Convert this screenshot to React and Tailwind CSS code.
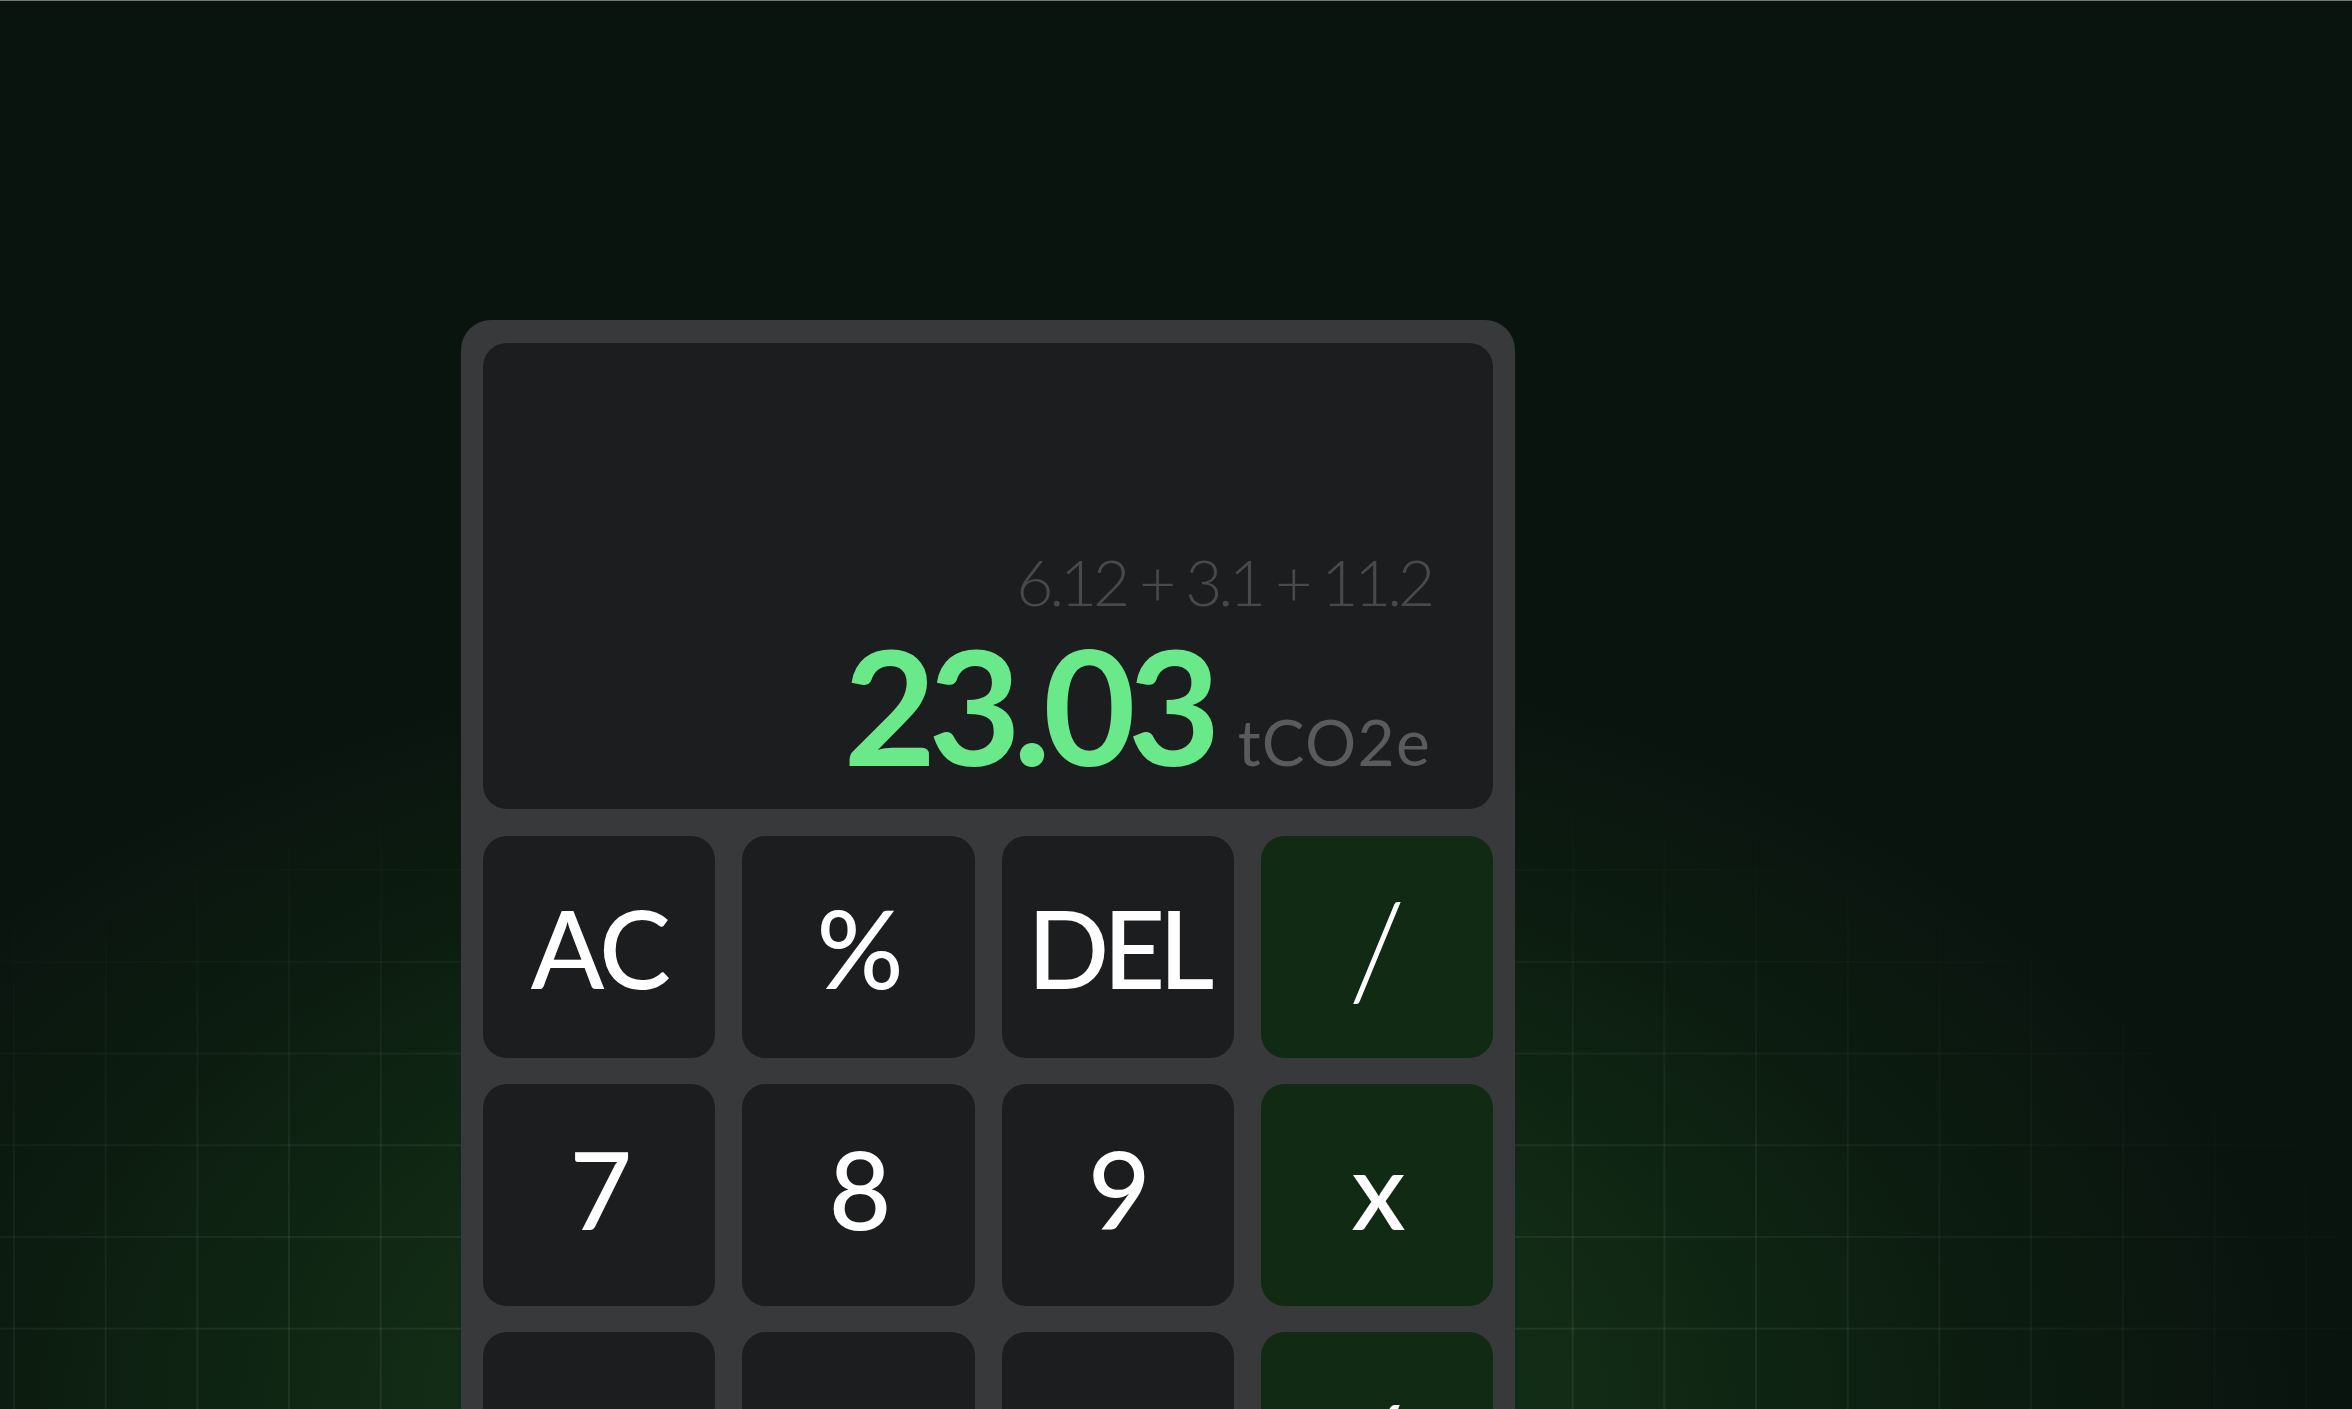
export default function App() {
  const rows = [
    [
      { l: "AC" },
      { l: "%" },
      { l: "DEL", tight: true },
      { l: "/", op: true, slash: true },
    ],
    [{ l: "7" }, { l: "8" }, { l: "9" }, { l: "x", op: true }],
    [{ l: "4" }, { l: "5" }, { l: "6" }, { l: "/", op: true }],
    [{ l: "1" }, { l: "2" }, { l: "3" }, { l: "+", op: true }],
  ];

  const rowPad = ["", "pb-[15px]", "pt-[26px]", "pt-[26px]"];

  return (
    <div className="relative h-[1409px] w-full overflow-hidden border-t border-[#727572] bg-[#0a140f] font-[family-name:Lato,sans-serif]">
      {/* green glow */}
      <div className="pointer-events-none absolute inset-0 bg-[radial-gradient(ellipse_1300px_780px_at_1000px_1409px,#153619_0%,#112b15_45%,#0c1d10_75%,#0a140f_100%)]" />
      {/* grid */}
      <div className="pointer-events-none absolute inset-0 bg-[linear-gradient(to_right,rgba(255,255,255,0.085)_2px,transparent_2px),linear-gradient(to_bottom,rgba(255,255,255,0.085)_2px,transparent_2px)] bg-[size:91.7px_91.7px] bg-[position:13px_43px] [mask-image:radial-gradient(ellipse_1500px_700px_at_1000px_1409px,black_0%,rgba(0,0,0,0.7)_55%,transparent_100%)]" />

      <div className="relative pl-[461px] pt-[319px]">
        <div className="w-[1054px] rounded-[30px] bg-[#38393b] px-[22px] pt-[23px] pb-[22px]">
          {/* display */}
          <div className="flex h-[466px] flex-col items-end justify-end rounded-[24px] bg-[#1c1d1f] pr-[62px] pb-[25px]">
            <div className="mb-[10px] text-[64px] font-light leading-none tracking-[-0.065em] text-[#48494b]">
              6.12 + 3.1 + 11.2
            </div>
            <div className="flex items-baseline gap-[25px]">
              <span className="text-[160px] font-bold leading-none tracking-[-0.05em] text-[#6ae98a]">
                23.03
              </span>
              <span className="text-[64px] font-normal leading-none tracking-[0.02em] text-[#5a5b5d]">
                tCO2e
              </span>
            </div>
          </div>

          {/* keys */}
          <div className="mt-[27px] grid grid-cols-4 gap-x-[27px] gap-y-[26px]">
            {rows.map((row, r) =>
              row.map((k, i) => (
                <div
                  key={r + "-" + i}
                  className={
                    "flex h-[222px] items-center justify-center rounded-[24px] leading-none text-white " +
                    (k.op ? "bg-[#102a14] " : "bg-[#1c1d1f] ") +
                    (k.slash
                      ? "text-[132px] font-light "
                      : k.tight
                      ? "text-[108px] font-medium tracking-[-0.06em] "
                      : "text-[108px] font-medium tracking-[-0.03em] ") +
                    (k.op && r >= 2 ? "" : rowPad[r])
                  }
                >
                  {k.l}
                </div>
              ))
            )}
          </div>
        </div>
      </div>
    </div>
  );
}
